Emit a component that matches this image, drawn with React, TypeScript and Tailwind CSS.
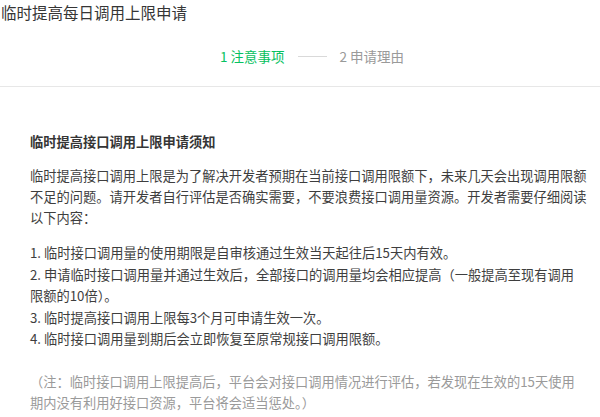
import React from "react";

export default function App() {
  const font = { fontFamily: '"Noto Sans CJK SC", "Noto Sans", sans-serif' };
  return (
    <div className="w-[600px] h-[417px] bg-white overflow-hidden text-[#353535]" style={font}>
      <div className="pl-[1px] h-[24px] leading-[24px] text-[15.5px]">临时提高每日调用上限申请</div>
      <div className="flex items-center pl-[220px] pt-[22px] pb-[20px] text-[13.5px] leading-[20px] border-b border-[#e7e7e7]">
        <span className="text-[#07c160]">1 注意事项</span>
        <span className="mx-[13px] w-[29px] h-px bg-[#d9d9d9]" />
        <span className="text-[#9a9a9a]">2 申请理由</span>
      </div>
      <div className="pl-[30px] w-[600px] text-[13.25px] leading-[21px] text-[#3e3e3e] whitespace-nowrap">
        <div className="mt-[44px] font-bold text-[#353535]">临时提高接口调用上限申请须知</div>
        <p className="mt-[13px]">
          临时提高接口调用上限是为了解决开发者预期在当前接口调用限额下，未来几天会出现调用限额
          <br />
          不足的问题。请开发者自行评估是否确实需要，不要浪费接口调用量资源。开发者需要仔细阅读
          <br />
          以下内容：
        </p>
        <div className="mt-[14px] leading-[21.5px]">
          <div>1. 临时接口调用量的使用期限是自审核通过生效当天起往后15天内有效。</div>
          <div>
            2. 申请临时接口调用量并通过生效后，全部接口的调用量均会相应提高（一般提高至现有调用
            <br />
            限额的10倍）。
          </div>
          <div>3. 临时提高接口调用上限每3个月可申请生效一次。</div>
          <div>4. 临时接口调用量到期后会立即恢复至原常规接口调用限额。</div>
        </div>
        <p className="mt-[21px] text-[#9a9a9a]">
          （注：临时接口调用上限提高后，平台会对接口调用情况进行评估，若发现在生效的15天使用
          <br />
          期内没有利用好接口资源，平台将会适当惩处。）
        </p>
      </div>
    </div>
  );
}
